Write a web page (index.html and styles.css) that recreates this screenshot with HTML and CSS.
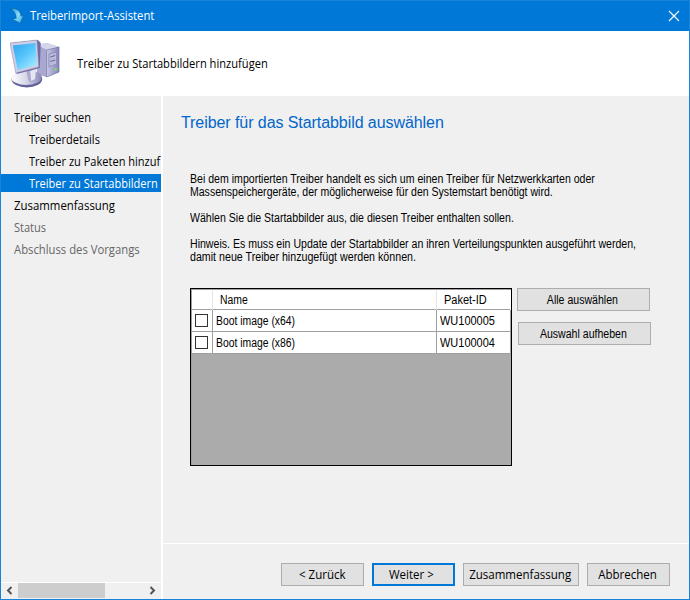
FILE: index.html
```
<!DOCTYPE html>
<html lang="de">
<head>
<meta charset="utf-8">
<title>Treiberimport-Assistent</title>
<link rel="stylesheet" href="styles.css">
</head>
<body>
<div class="window">
  <div class="titlebar">
    <svg class="app-icon" width="14" height="16" viewBox="0 0 14 16">
      <defs><linearGradient id="arrow" x1="0" y1="0" x2="1" y2="1"><stop offset="0" stop-color="#1c8fd4"/><stop offset=".5" stop-color="#8adcf6"/><stop offset="1" stop-color="#2aa6e2"/></linearGradient></defs>
      <path d="M.4 .6C6 -.2 10.500 2.500 11 8.300L13.600 7 10.200 15.300 2.800 11.300 6.300 10.300C6.300 6 4.300 3 .4 .6Z" fill="url(#arrow)" stroke="#1a649c" stroke-width=".6"/>
    </svg>
    <span class="title">Treiberimport-Assistent</span>
    <svg class="close" width="12" height="12" viewBox="0 0 12 12"><path d="M1 1L11 11M11 1L1 11" stroke="#fff" stroke-width="1.200"/></svg>
  </div>
  <div class="header">
    <svg class="computer" width="50" height="50" viewBox="0 0 52 50" preserveAspectRatio="none">
      <defs>
        <linearGradient id="screen" x1="0" y1="0" x2=".8" y2="1"><stop offset="0" stop-color="#31a5f1"/><stop offset=".5" stop-color="#55c4fb"/><stop offset="1" stop-color="#a4eaff"/></linearGradient>
        <linearGradient id="side"><stop offset="0" stop-color="#c9c9e5"/><stop offset="1" stop-color="#8584b9"/></linearGradient>
        <linearGradient id="base"><stop offset="0" stop-color="#fff"/><stop offset=".5" stop-color="#d6d6e8"/><stop offset="1" stop-color="#8887b7"/></linearGradient>
      </defs>
      <path d="M28 6L38 4 51 8 51 33 39 38 28 35Z" fill="#a3a2ca"/>
      <path d="M28 6L38 4 51 8 38 11Z" fill="#d5d5ea"/>
      <path d="M28 6L38 11 38 38 28 35Z" fill="#a9a8d0"/>
      <path d="M38 11L51 8 51 33 38 38Z" fill="url(#side)" stroke="#7471a8" stroke-width=".6"/>
      <path d="M40.500 15L48.500 13V25L40.500 28Z" fill="#bcbbdc" stroke="#7776aa" stroke-width=".6"/>
      <path d="M42 18L47 16.500M42 22.500L47 21" stroke="#62619b" stroke-width="1"/>
      <circle cx="47.500" cy="30.500" r="1.400" fill="#7bdc60"/>
      <ellipse cx="17.500" cy="40" rx="16" ry="8.500" fill="#65619a"/>
      <ellipse cx="17" cy="38.500" rx="15.800" ry="7.500" fill="url(#base)"/>
      <path d="M17 32L27 30 26 41Q22 45 19 41Z" fill="#aaa9ce"/>
      <path d="M21 32L27 30 26 40 22 42Z" fill="#e5e5f3"/>
      <path d="M1 4L29 1 32 4 31 29 7 35Z" fill="#6e6ba3"/>
      <path d="M0 4L28 1 30 28 6 34Z" fill="#cdcde4" stroke="#8785b0" stroke-width=".5"/>
      <path d="M3 6.500L26.500 4 28 26 8 31Z" fill="url(#screen)"/>
    </svg>
    <span class="step">Treiber zu Startabbildern hinzufügen</span>
  </div>
  <div class="body">
    <div class="sidebar">
      <div class="nav">
        <div class="item n1"><span>Treiber suchen</span></div>
        <div class="item sub n2"><span>Treiberdetails</span></div>
        <div class="item sub n3"><span>Treiber zu Paketen hinzuf</span></div>
        <div class="item sub selected n4"><span>Treiber zu Startabbildern</span></div>
        <div class="item n5"><span>Zusammenfassung</span></div>
        <div class="item muted n6"><span>Status</span></div>
        <div class="item muted n7"><span>Abschluss des Vorgangs</span></div>
      </div>
      <div class="scrollbar">
        <svg width="17" height="15" viewBox="0 0 17 15"><path d="M10.500 4L7 7.500 10.500 11" fill="none" stroke="#555" stroke-width="2"/></svg>
        <div class="thumb"></div>
        <svg width="17" height="15" viewBox="0 0 17 15"><path d="M6.500 4L10 7.500 6.500 11" fill="none" stroke="#555" stroke-width="2"/></svg>
      </div>
    </div>
    <div class="main">
      <div class="page">
        <h1>Treiber für das Startabbild auswählen</h1>
        <div class="copy">
          <p><span class="c1">Bei dem importierten Treiber handelt es sich um einen Treiber für Netzwerkkarten oder</span><span class="c2">Massenspeichergeräte, der möglicherweise für den Systemstart benötigt wird.</span></p>
          <p><span class="c3">Wählen Sie die Startabbilder aus, die diesen Treiber enthalten sollen.</span></p>
          <p><span class="c4">Hinweis. Es muss ein Update der Startabbilder an ihren Verteilungspunkten ausgeführt werden,</span><span class="c5">damit neue Treiber hinzugefügt werden können.</span></p>
        </div>
        <div class="selection">
          <div class="grid">
            <div class="row head"><div></div><div><span class="boot">Name</span></div><div><span class="pid">Paket-ID</span></div></div>
            <div class="row"><div><i class="check"></i></div><div><span class="boot">Boot image (x64)</span></div><div><span class="code">WU100005</span></div></div>
            <div class="row"><div><i class="check"></i></div><div><span class="boot">Boot image (x86)</span></div><div><span class="code">WU100004</span></div></div>
          </div>
          <div class="actions">
            <button class="all"><span>Alle auswählen</span></button>
            <button class="none"><span>Auswahl aufheben</span></button>
          </div>
        </div>
      </div>
      <div class="footer">
        <button class="back"><span>&lt; Zurück</span></button>
        <button class="next"><span>Weiter &gt;</span></button>
        <button class="summary"><span>Zusammenfassung</span></button>
        <button class="cancel"><span>Abbrechen</span></button>
      </div>
    </div>
  </div>
</div>
</body>
</html>
```
FILE: styles.css
```
* { box-sizing: border-box; }
body { margin: 0; font: 12px/16px "Open Sans", "Noto Sans", sans-serif; color: #000; }
.window { width: 690px; height: 600px; border: 1px solid #1883d7; background: #f0f0f0; display: flex; flex-direction: column; overflow: hidden; }
.titlebar { height: 30px; flex: none; background: #0078d7; color: #fff; display: flex; align-items: center; padding: 0 9px; }
.app-icon { margin-right: 6px; }
.close { margin-left: auto; }
.header { height: 65px; flex: none; background: #fff; display: flex; align-items: center; padding-left: 9px; }
.computer { margin-right: 17px; }
.title, .step, .item, button { white-space: nowrap; }
.title, .step, .item span, .copy span, .row span { transform-origin: 0 50%; }
.title { transform: scaleX(.939); }
.step { transform: scaleX(.927); }
.body { flex: 1; min-height: 0; display: flex; }
.sidebar { width: 162px; flex: none; border-right: 2px solid #fff; display: flex; flex-direction: column; overflow: hidden; }
.nav { flex: 1; padding-top: 12px; display: flex; flex-direction: column; gap: 4px; }
.item { height: 18px; line-height: 19px; padding-left: 13px; }
.item span { display: inline-block; transform: scaleX(.92); }
.n5 span { transform: scaleX(.95); }
.n7 span { transform: scaleX(.94); }
.sub { padding-left: 28px; }
.selected { background: #0078d7; color: #fff; }
.muted { color: #666; }
.scrollbar { height: 17px; border-top: 1px solid #fff; display: flex; padding-bottom: 1px; }
.thumb { width: 87px; background: #cdcdcd; margin-right: auto; }
.main { flex: 1; min-width: 0; display: flex; flex-direction: column; }
.page { height: 447px; padding: 16px 0 0 27px; font: 12px/13px "Liberation Sans", Arial, sans-serif; }
h1 { margin: 0 0 0 -9px; font-size: 16px; line-height: 22px; font-weight: 400; letter-spacing: -.07px; color: #0066cc; }
.copy { margin-top: 39px; }
.copy p { margin: 0 0 13px; white-space: nowrap; }
.copy span { display: block; width: max-content; }
.c1, .c3, .c4 { transform: scaleX(.881); }
.c2 { transform: scaleX(.877); }
.c5 { transform: scaleX(.889); }
.selection { display: flex; margin-top: 24px; gap: 5px; }
.grid { width: 322px; height: 178px; border: 1px solid #000; background: #ababab; padding: 1px 0 0 1px; box-shadow: inset 1px 1px #a0a0a0; }
.row { height: 22px; display: grid; grid-template-columns: 21px 224px 1fr; background: #fff; border-bottom: 1px solid #a0a0a0; line-height: 22px; }
.row > div { border-right: 1px solid #a0a0a0; padding-left: 3px; white-space: nowrap; }
.row span { display: inline-block; }
.boot { transform: scaleX(.865); }
.code, .pid { transform: scaleX(.915); }
.head { height: 20px; line-height: 20px; }
.head > div { border-color: #e5e5e5; padding-left: 7px; }
.head > div:last-child { border-color: #fff; }
.check { display: block; width: 13px; height: 13px; border: 1px solid #333; margin-top: 4px; }
.actions { display: flex; flex-direction: column; gap: 11px; }
button { height: 23px; padding: 1px 0 0; margin: 0; border: 1px solid #adadad; border-radius: 0; background: #e1e1e1; color: #000; font: inherit; text-align: center; }
button span { display: inline-block; transform: scaleX(.96); }
.actions button { width: 133px; padding-right: 3px; }
.actions .none { margin-left: 1px; }
.actions span { transform: scaleX(.88); }
.footer { flex: 1; border-top: 1px solid #fff; display: flex; justify-content: flex-end; gap: 8px; padding: 19px 19px 0 0; }
.footer button { width: 83px; padding-right: 1px; }
.footer .summary { width: 116px; }
.footer .next { border: 2px solid #0078d7; padding: 0 4px 0 0; }
```
